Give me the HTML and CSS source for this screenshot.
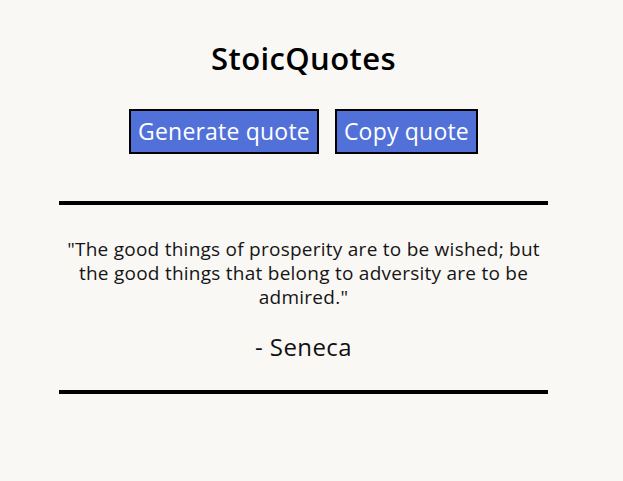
FILE: index.html
```html
<!DOCTYPE html>
<html lang="en">
<head>
<meta charset="utf-8">
<title>StoicQuotes</title>
<link rel="stylesheet" href="styles.css">
</head>
<body>
<main class="app">
  <h1 class="title">StoicQuotes</h1>
  <div class="actions">
    <button class="btn">Generate quote</button>
    <button class="btn">Copy quote</button>
  </div>
  <section class="quote-box">
    <p class="quote">"The good things of prosperity are to be wished; but the good things that belong to adversity are to be admired."</p>
    <p class="author">- Seneca</p>
  </section>
</main>
</body>
</html>
```
FILE: styles.css
```css
html, body {
  margin: 0;
  padding: 0;
  background: #faf8f5;
}
body {
  font-family: "Open Sans", "Lato", sans-serif;
  color: #111;
}
.app {
  width: 607px;
  padding-top: 38px;
}
.title {
  margin: 0;
  text-align: center;
  font-size: 31px;
  font-weight: 600;
  letter-spacing: 0.4px;
  line-height: 40px;
  color: #000;
}
.actions {
  display: flex;
  justify-content: center;
  gap: 16px;
  margin-top: 31px;
}
.btn {
  font-family: inherit;
  font-size: 23px;
  letter-spacing: 0.2px;
  color: #fff;
  background: #5271d8;
  border: 2px solid #000;
  border-radius: 0;
  height: 45px;
  padding: 0 7px;
  line-height: 41px;
}
.quote-box {
  width: 489px;
  margin: 47px auto 0;
  border-top: 4px solid #000;
  border-bottom: 4px solid #000;
  text-align: center;
  padding: 32px 8px 28px;
  box-sizing: border-box;
}
.quote {
  margin: 0;
  font-size: 19px;
  letter-spacing: 0.25px;
  line-height: 24px;
  color: #151515;
}
.author {
  margin: 23px 0 0;
  font-size: 24px;
  letter-spacing: 0.4px;
  line-height: 30px;
  color: #111;
}
```
